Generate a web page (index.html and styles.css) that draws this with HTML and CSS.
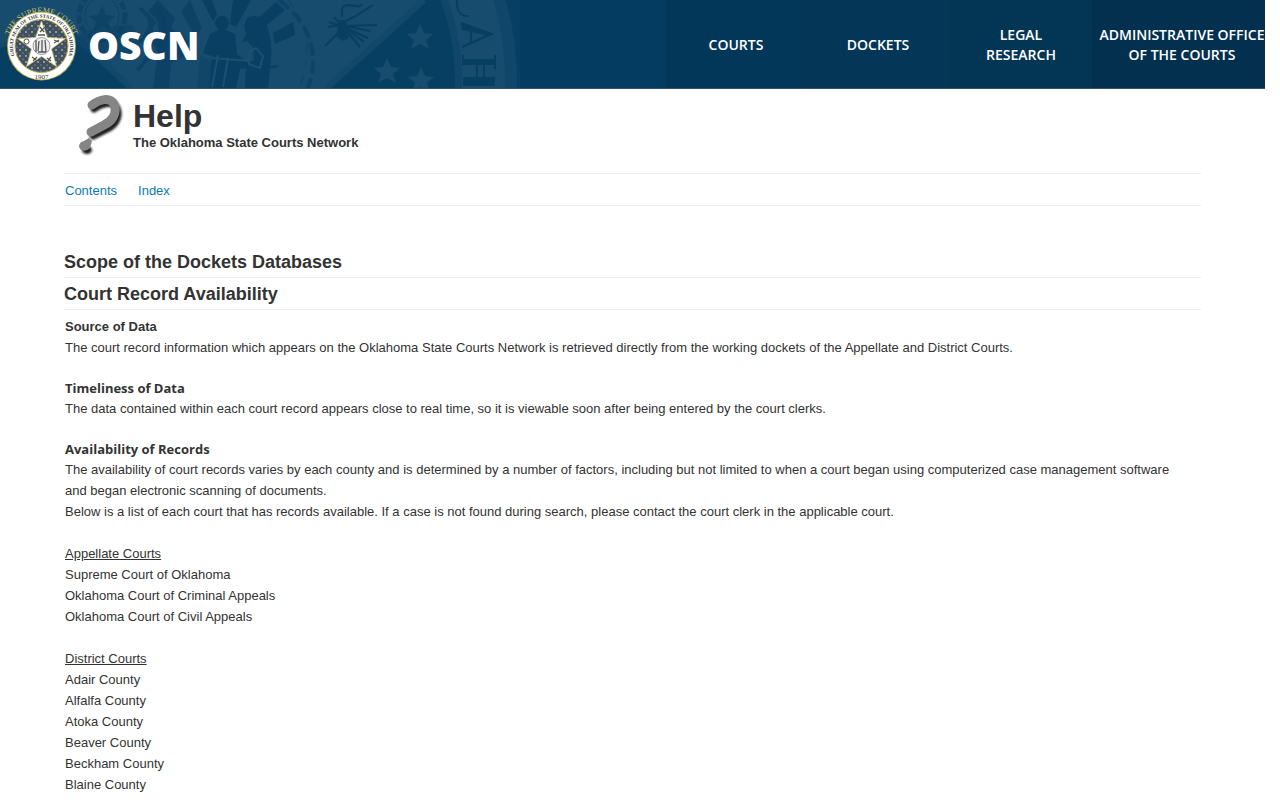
FILE: index.html
```html
<!DOCTYPE html>
<html lang="en">
<head>
<meta charset="utf-8">
<title>OSCN Help</title>
<link rel="stylesheet" href="styles.css">
</head>
<body>
<header class="banner">
  <svg class="banner-art" width="520" height="88" viewBox="0 0 520 88" aria-hidden="true">
    <defs><path id="star" d="M0-13 4-4 13-3 6 3 9 12 0 7-9 12-6 3-13-3-4-4Z"/></defs>
    <rect width="520" height="88" fill="#073f63"/>
    <circle cx="229" cy="80" r="288" fill="#0f466a"/>
    <circle cx="229" cy="80" r="276" fill="#184c6e"/>
    <circle cx="229" cy="80" r="233" fill="#0f466a"/>
    <circle cx="229" cy="80" r="226" fill="#073f63"/>
    <path d="M0 0H424L327 88H131L66 26 0 46Z" fill="#184c6e"/>
    <path d="M424 0 327 88M0 46 66 28 131 88" fill="none" stroke="#124869" stroke-width="6"/>
    <path d="M0 48 64 32 122 88H0Z" fill="#073f63"/>
    <g fill="none" stroke="#0d4366">
      <ellipse cx="102" cy="16" rx="23" ry="24" stroke-width="5" stroke-dasharray="8 3"/>
      <ellipse cx="102" cy="16" rx="17" ry="19" stroke-width="1"/>
      <path d="M279 0Q326 36 308 88" stroke-width="4" stroke-dasharray="13 5"/>
      <path d="M288 0Q320 36 299 88" stroke-width="1" stroke-dasharray="9 7"/>
      <path d="M137 70Q157 54 149 18M156 5q15 24 3 42M140 8l14 14-13 20" stroke-width="4"/>
    </g>
    <path d="M342 17V10q0-5 7-5l7 1q5 1 6-2M342 23l12-6 19-12M345 26l32-1M345 29l15 18M347 29l17 13M346 28l22 10M345 26l25 5M339 32l-14 14M329 22l14 5M328 27l12-2M334 17l7 8" fill="none" stroke="#073f63" stroke-width="2"/>
    <use href="#star" transform="translate(102 19)" fill="#0d4366"/>
    <g fill="#093f63">
      <path d="M202 0h10l5 14-4 7ZM233 0h18l-15 27-6-3ZM255 21l21-19 9 8-23 19ZM273 33l20-11 2 13-20 9Z"/>
      <circle cx="222" cy="23" r="7"/>
      <path d="M210 34l12-6 13 6 2 20 10 8 14-3v6l-21 4-4 19h-27l3-32-9-3Z"/>
      <path d="M247 18q9-5 17 3 9 14 7 39l-3 28h-23l1-22 8-6-1-13-6-6-5 1 4-8-2-8Z"/>
      <path d="M158 0l17 18-4 10 18 13-2 14-16 8-2 25h-16l5-35-7-15 8-5-2-13-9-9ZM190 0l12 28-7 8-14-24Z" opacity=".7"/>
      <path d="M200 55l12 7 7 26h-22ZM74 38l24-11 34-2 10 16-12 13-29 2-20 14Z" opacity=".5"/>
      <path d="M338 20h8l3 18-6 3-6-4Z"/>
    </g>
    <path d="M248 53l8-5 7 8-3 12-11-4ZM218 55l-6 32M228 58l-5 29M212 58l38 3" fill="none" stroke="#1d4f70" stroke-width="2"/>
    <path d="M262 69l16-3" fill="none" stroke="#093f63" stroke-width="2"/>
    <g fill="#184c6e">
      <use href="#star" transform="translate(420 37)"/>
      <use href="#star" transform="translate(387 71)"/>
      <use href="#star" transform="translate(421 80)"/>
    </g>
    <path d="M457 0q-1 17 12 16M461 23 491 34 462 47M471 27v17M463 55v10M495 55v14M477 62v24M484 62v24" fill="none" stroke="#073f63" stroke-width="2"/>
    <path d="M463 59h32v6h-32ZM463 77h32v9h-32ZM461 22l33 12-4 2-28-6Z" fill="#073f63"/>
  </svg>
  <a class="brand" href="#" aria-label="OSCN">
    <svg class="seal" width="84" height="88" viewBox="0 0 84 88" aria-hidden="true">
      <defs>
        <path id="outer" d="M8 41A34 34 0 0 1 75 41"/>
        <path id="ring" d="M22 67A28.500 28.500 0 1 1 61 67"/>
        <pattern id="dots" width="6" height="6" patternUnits="userSpaceOnUse"><rect width="6" height="6" fill="#3d5065"/><circle cx="2" cy="2" r=".9" fill="#c5bc76"/><circle cx="5" cy="5" r=".6" fill="#c5bc76"/></pattern>
      </defs>
      <circle cx="41.500" cy="46" r="34.500" fill="#b5ad52"/>
      <circle cx="41.500" cy="46" r="33.500" fill="#fff"/>
      <circle cx="41.500" cy="46" r="26.500" fill="url(#dots)" stroke="#b5ad52"/>
      <path d="M41.500 21 47.500 37.500 65.500 38.500 51.500 49 56.500 66.500 41.500 56.500 26.500 66.500 31.500 49 17.500 38.500 35.500 37.500Z" fill="#fff" stroke="#c9bf70" stroke-width=".8"/>
      <circle cx="41.500" cy="46" r="8.500" fill="#eee" stroke="#777" stroke-width=".7"/>
      <path d="M36 40v12M39 41l-1 10M42 40v12M45 40l1 12M38 52h8M40 27l4 5M40 32l4-4M38 35h7M54 40l5 2M54 43l5-3M32 57l4 3M33 61l4-4M47 58l4 3M48 61l3-4" fill="none" stroke="#555" stroke-width="1.300"/>
      <circle cx="26.500" cy="41.500" r="2.500" fill="none" stroke="#555"/>
      <text class="seal-court"><textPath href="#outer" startOffset="50%">THE SUPREME COURT</textPath></text>
      <text class="seal-ring"><textPath href="#ring" startOffset="50%">GREAT SEAL OF THE STATE OF OKLAHOMA</textPath></text>
      <text class="seal-year" x="41.500" y="79">1907</text>
    </svg>
    <span class="brand-name">OSCN</span>
  </a>
  <nav class="main-nav" aria-label="Main">
    <a href="#">COURTS</a>
    <a href="#">DOCKETS</a>
    <a href="#">LEGAL<br>RESEARCH</a>
    <a href="#">ADMINISTRATIVE OFFICE<br>OF THE COURTS</a>
  </nav>
</header>
<main class="content">
  <div class="help-head">
    <svg class="question" width="60" height="70" viewBox="0 0 60 70" aria-hidden="true">
      <defs><filter id="soft" x="-20%" y="-20%" width="150%" height="150%"><feGaussianBlur stdDeviation="1.300"/></filter></defs>
      <g transform="translate(2 4)" filter="url(#soft)" fill="none" stroke="#222" stroke-linecap="round"><path d="M21 13C29 7 40 5 44 12 48 22 41 30 34 33L20 40" stroke-width="7"/><ellipse cx="14" cy="54" rx="3" ry="2" stroke-width="4"/></g>
      <path d="M21 13C29 7 39 5 43 12 47 22 40 30 33 33L20 40" fill="none" stroke="#858585" stroke-width="9" stroke-linecap="round"/>
      <path d="M8 55Q8 50 13 49L18 46 21 49 19 56Q15 60 10 58Z" fill="#858585"/>
    </svg>
    <div>
      <h1>Help</h1>
      <p class="tagline">The Oklahoma State Courts Network</p>
    </div>
  </div>
  <nav class="help-nav" aria-label="Help">
    <a href="#">Contents</a>
    <a href="#">Index</a>
  </nav>
  <h2>Scope of the Dockets Databases</h2>
  <h2>Court Record Availability</h2>
  <section>
    <h3 class="plain">Source of Data</h3>
    <p>The court record information which appears on the Oklahoma State Courts Network is retrieved directly from the working dockets of the Appellate and District Courts.</p>
  </section>
  <section>
    <h3>Timeliness of Data</h3>
    <p>The data contained within each court record appears close to real time, so it is viewable soon after being entered by the court clerks.</p>
  </section>
  <section>
    <h3>Availability of Records</h3>
    <p>The availability of court records varies by each county and is determined by a number of factors, including but not limited to when a court began using computerized case management software and began electronic scanning of documents.</p>
    <p>Below is a list of each court that has records available. If a case is not found during search, please contact the court clerk in the applicable court.</p>
  </section>
  <section class="courts">
    <h4>Appellate Courts</h4>
    <ul>
      <li>Supreme Court of Oklahoma</li>
      <li>Oklahoma Court of Criminal Appeals</li>
      <li>Oklahoma Court of Civil Appeals</li>
    </ul>
  </section>
  <section class="courts">
    <h4>District Courts</h4>
    <ul>
      <li>Adair County</li>
      <li>Alfalfa County</li>
      <li>Atoka County</li>
      <li>Beaver County</li>
      <li>Beckham County</li>
      <li>Blaine County</li>
    </ul>
  </section>
</main>
</body>
</html>
```
FILE: styles.css
```css
* { box-sizing: border-box; }
body {
  margin: 0 15px 0 0;
  font: 13px/21px "Liberation Sans", Arial, sans-serif;
  color: #333;
  background: #fff;
}
h1, h2, h3, h4, p, ul { margin: 0; padding: 0; }
ul { list-style: none; }
a { text-decoration: none; }

.banner {
  position: relative;
  display: flex;
  justify-content: space-between;
  height: 89px;
  overflow: hidden;
  background: #043b61;
  border-bottom: 1px solid #34556f;
}
.banner-art { position: absolute; left: 0; top: 0; }
.brand { position: relative; display: flex; align-items: flex-start; gap: 4px; color: #fff; }
.brand-name { font: 800 39px/90px "Open Sans", sans-serif; }
.seal text { text-anchor: middle; font-family: "Liberation Serif", serif; }
.seal .seal-court { font-size: 8px; fill: #c8c16b; }
.seal .seal-ring { font-size: 5px; font-weight: bold; fill: #333; }
.seal .seal-year { font-size: 7px; fill: #333; }
.main-nav {
  position: relative;
  display: grid;
  grid-template-columns: 140px 144px 142px 180px;
  margin-right: -7px;
}
.main-nav a {
  display: flex;
  align-items: center;
  justify-content: center;
  padding-top: 2px;
  text-align: center;
  white-space: nowrap;
  font: 600 14px/20px "Open Sans", sans-serif;
  color: #fff;
  background: #033759;
}
.main-nav a:nth-child(2) { background: #033657; }
.main-nav a:nth-child(3) { background: #033555; }
.main-nav a:nth-child(4) { background: #03304f; }

.content { padding: 3px 64px 0; }
.help-head { display: flex; gap: 2px; margin-left: 7px; height: 81px; }
.help-head h1 { font-size: 32px; line-height: 38px; padding-top: 5px; }
.tagline { font-weight: bold; line-height: 16px; }
.help-nav {
  display: flex;
  gap: 21px;
  padding: 6px 1px 4px;
  border-top: 1px solid #eee;
  border-bottom: 1px solid #eee;
  margin-bottom: 40px;
}
.help-nav a { color: #0b7bb5; }
h2 {
  padding-top: 2px;
  font-size: 18px;
  line-height: 29px;
  border-bottom: 1px solid #eee;
}
h3 { font: bold 13px/20px "Open Sans", sans-serif; }
h3.plain { font-family: "Liberation Sans", Arial, sans-serif; line-height: 21px; }
h2 + section { margin-top: 6px; }
section { margin-bottom: 20px; padding: 0 16px 0 1px; }
.courts { margin: 21px 0; }
h4 { font-weight: normal; font-size: 13px; text-decoration: underline; }
```
